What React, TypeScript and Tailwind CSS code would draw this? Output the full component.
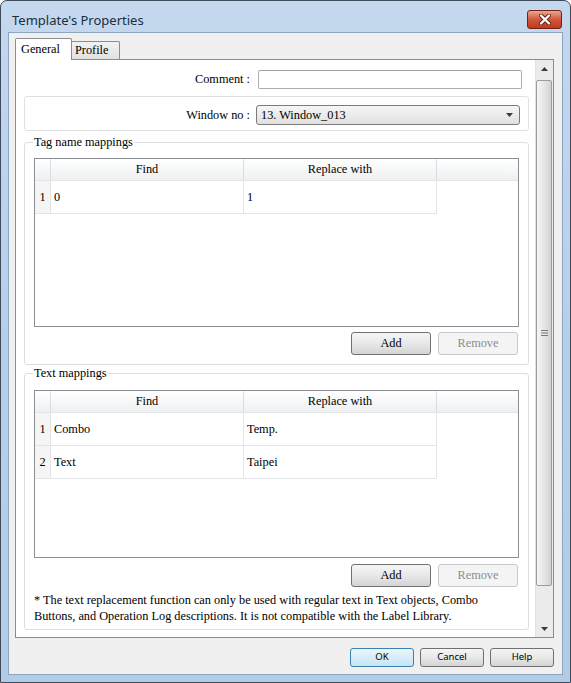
import React from 'react';

interface MappingRow {
  find: string;
  replace: string;
}

const tagRows: MappingRow[] = [{ find: '0', replace: '1' }];
const textRows: MappingRow[] = [
  { find: 'Combo', replace: 'Temp.' },
  { find: 'Text', replace: 'Taipei' },
];

const DlgButton: React.FC<{ label: string; disabled?: boolean }> = ({ label, disabled }) => (
  <button
    className={
      disabled
        ? 'w-[80px] h-[23px] rounded-[3px] border border-[#c5c9cc] bg-[#f4f4f4] text-[#8d8d8d]'
        : 'w-[80px] h-[23px] rounded-[3px] border border-[#707070] bg-linear-to-b from-[#f5f5f5] via-[#e8e8e8] to-[#d4d4d4] text-black'
    }
  >
    {label}
  </button>
);

const MappingTable: React.FC<{ rows: MappingRow[]; heightClass: string }> = ({ rows, heightClass }) => (
  <div className={`w-[485px] ${heightClass} border border-[#8b8e94] bg-white flex flex-col`}>
    <div className="flex h-[22px] shrink-0 border-b border-[#e3e4e6] bg-linear-to-b from-white to-[#eef0f2]">
      <div className="w-[16px] border-r border-[#dcdde0]" />
      <div className="w-[193px] border-r border-[#dcdde0] flex items-center justify-center">Find</div>
      <div className="w-[193px] border-r border-[#dcdde0] flex items-center justify-center">Replace with</div>
      <div className="flex-1" />
    </div>
    {rows.map((r, i) => (
      <div key={i} className="flex h-[33px] w-[402px] shrink-0 border-b border-[#e3e4e6]">
        <div className="w-[16px] border-r border-[#e3e4e6] bg-[#f5f5f5] flex items-center justify-center">{i + 1}</div>
        <div className="w-[193px] border-r border-[#e3e4e6] flex items-center pl-[3px]">{r.find}</div>
        <div className="w-[193px] border-r border-[#e3e4e6] flex items-center pl-[3px]">{r.replace}</div>
      </div>
    ))}
  </div>
);

const GroupBox: React.FC<{ title: string; className: string; children: React.ReactNode }> = ({ title, className, children }) => (
  <div className={`ml-[8px] w-[505px] rounded-[3px] border border-[#dedede] bg-white flex flex-col ${className}`}>
    <span className="-mt-[9px] ml-[8px] w-fit px-[1px] h-[16px] leading-[16px] bg-white">{title}</span>
    {children}
  </div>
);

const Arrow: React.FC<{ down?: boolean }> = ({ down }) => (
  <svg width="7" height="4" viewBox="0 0 7 4">
    <path d={down ? 'M0 0H7L3.5 4Z' : 'M0 4H7L3.5 0Z'} fill="#3a3a3a" />
  </svg>
);

export default function App() {
  return (
    <div className="w-[571px] h-[683px] flex flex-col rounded-t-[7px] border border-[#3e4b5b] bg-linear-to-b from-[#c4d8ee] via-[#b6cfe9] to-[#b2cce8] overflow-hidden">
      {/* title bar */}
      <div className="h-[31px] shrink-0 flex items-start justify-between pl-[11px] pr-[8px]">
        <span className="pt-[10px] leading-[18px] text-[13px] text-[#1a2d44] font-['Noto_Sans',sans-serif]">
          Template's Properties
        </span>
        <div className="mt-[9px] w-[35px] h-[19px] rounded-[3px] border border-[#6e2417] bg-linear-to-b from-[#e9a491] via-[#d2573b] to-[#c2391c] flex items-center justify-center">
          <svg width="12" height="11" viewBox="0 0 12 11">
            <path d="M2 1.5L10 9.5M10 1.5L2 9.5" stroke="#5c1a0e" strokeWidth="4" strokeLinecap="round" />
            <path d="M2 1.5L10 9.5M10 1.5L2 9.5" stroke="#ffffff" strokeWidth="2.4" strokeLinecap="round" />
          </svg>
        </div>
      </div>

      {/* client area */}
      <div className="mx-[7px] mb-[7px] flex-1 flex flex-col border border-[#8ea5bf] bg-[#f0f0f0] font-['Liberation_Serif',serif] text-[12.3px] text-black">
        {/* tabs */}
        <div className="flex items-end pt-[5px] pl-[6px]">
          <div className="relative z-10 -mb-px w-[57px] h-[22px] border border-b-0 border-[#898c95] bg-white rounded-t-[2px] flex items-center pl-[5px]">
            General
          </div>
          <div className="-ml-px w-[49px] h-[18px] border border-b-0 border-[#898c95] bg-linear-to-b from-[#f2f2f2] to-[#e1e1e1] rounded-t-[2px] flex items-center pl-[3px]">
            Profile
          </div>
        </div>

        {/* tab panel */}
        <div className="ml-[6px] mr-[8px] h-[579px] border border-[#898c95] bg-white flex">
          <div className="flex-1 flex flex-col">
            <div className="mt-[10px] pr-[13px] flex items-center justify-end gap-[8px]">
              <span>Comment :</span>
              <div className="w-[264px] h-[19px] rounded-[2px] border border-[#abadb3] border-t-[#9fa2a8] bg-white" />
            </div>

            <div className="mt-[7px] ml-[8px] w-[505px] h-[35px] rounded-[3px] border border-[#e0e0e0] flex items-start justify-end pt-[8px] pr-[8px] gap-[6px]">
              <span className="leading-[20px]">Window no :</span>
              <div className="w-[264px] h-[20px] rounded-[3px] border border-[#7a7a7a] bg-linear-to-b from-[#f6f6f6] to-[#e0e0e0] flex items-center justify-between pl-[4px] pr-[6px]">
                <span>13. Window_013</span>
                <Arrow down />
              </div>
            </div>

            <GroupBox title="Tag name mappings" className="mt-[11px]">
              <div className="mt-[8px] pl-[9px]">
                <MappingTable rows={tagRows} heightClass="h-[169px]" />
              </div>
              <div className="mt-[5px] pb-[9px] pr-[10px] flex justify-end gap-[7px]">
                <DlgButton label="Add" />
                <DlgButton label="Remove" disabled />
              </div>
            </GroupBox>

            <GroupBox title="Text mappings" className="mt-[8px]">
              <div className="mt-[9px] pl-[9px]">
                <MappingTable rows={textRows} heightClass="h-[168px]" />
              </div>
              <div className="mt-[6px] pr-[10px] flex justify-end gap-[7px]">
                <DlgButton label="Add" />
                <DlgButton label="Remove" disabled />
              </div>
              <p className="mt-[5px] pb-[5px] pl-[9px] leading-[16px] whitespace-nowrap">
                * The text replacement function can only be used with regular text in Text objects, Combo
                <br />
                Buttons, and Operation Log descriptions. It is not compatible with the Label Library.
              </p>
            </GroupBox>
          </div>

          {/* scrollbar */}
          <div className="w-[18px] flex flex-col bg-[#ebebeb] border-l border-[#e2e2e2] pr-[1px]">
            <div className="h-[17px] flex items-center justify-center">
              <Arrow />
            </div>
            <div className="mt-[3px] h-[506px] rounded-[2px] border border-[#9c9c9c] bg-linear-to-r from-[#f6f6f6] via-[#e6e6e6] to-[#d2d2d2] flex items-center justify-center">
              <svg width="7" height="8" viewBox="0 0 7 8">
                <path d="M0 1.5H7M0 4H7M0 6.5H7" stroke="#7a7a7a" strokeWidth="1" />
              </svg>
            </div>
            <div className="flex-1" />
            <div className="h-[17px] flex items-center justify-center">
              <Arrow down />
            </div>
          </div>
        </div>

        {/* dialog buttons */}
        <div className="mt-[10px] pr-[8px] flex justify-end gap-[6px] font-['Noto_Sans',sans-serif] text-[9.5px]">
          <button className="w-[64px] h-[19px] rounded-[3px] border border-[#3c7fb1] bg-linear-to-b from-[#eaf6fd] to-[#c4e5f6] text-black">
            OK
          </button>
          <button className="w-[64px] h-[19px] rounded-[3px] border border-[#707070] bg-linear-to-b from-[#f5f5f5] via-[#e8e8e8] to-[#d4d4d4] text-black">
            Cancel
          </button>
          <button className="w-[64px] h-[19px] rounded-[3px] border border-[#707070] bg-linear-to-b from-[#f5f5f5] via-[#e8e8e8] to-[#d4d4d4] text-black">
            Help
          </button>
        </div>
      </div>
    </div>
  );
}
